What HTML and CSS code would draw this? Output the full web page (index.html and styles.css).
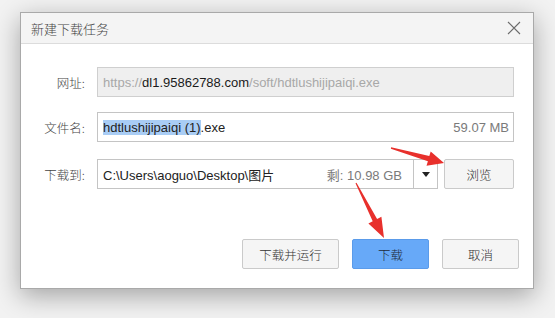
FILE: index.html
```html
<!DOCTYPE html>
<html lang="zh-CN">
<head>
  <meta charset="UTF-8">
  <title>新建下载任务</title>
  <link rel="stylesheet" href="styles.css">
</head>
<body>
  <div class="screen">

    <div class="dialog">
      <div class="titlebar">
        <span class="title">新建下载任务</span>
        <svg class="close" width="14" height="14" viewBox="0 0 14 14">
          <path d="M1 1 L13 13 M13 1 L1 13" stroke="#6b6b6b" stroke-width="1.1" fill="none"/>
        </svg>
      </div>

      <div class="form">
        <div class="row">
          <label class="label">网址:</label>
          <div class="field readonly">
            <span class="muted">https://</span><span class="host">dl1.95862788.com</span><span class="muted">/soft/hdtlushijipaiqi.exe</span>
          </div>
        </div>

        <div class="row">
          <label class="label">文件名:</label>
          <div class="field">
            <span class="name"><span class="selected">hdtlushijipaiqi (1)</span>.exe</span>
            <span class="size">59.07 MB</span>
          </div>
        </div>

        <div class="row row-path">
          <label class="label">下载到:</label>
          <div class="field combo">
            <span class="name">C:\Users\aoguo\Desktop\图片</span>
            <span class="size free">剩: 10.98 GB</span>
            <span class="drop"><span class="caret"></span></span>
          </div>
          <button class="btn browse">浏览</button>
        </div>
      </div>

      <div class="actions">
        <button class="btn wide">下载并运行</button>
        <button class="btn primary">下载</button>
        <button class="btn">取消</button>
      </div>
    </div>

    <!-- annotation arrows drawn over the screenshot -->
    <svg class="annot" width="555" height="318" viewBox="0 0 555 318">
      <polygon fill="#e8302c" points="391.1,147.3 429.3,156.0 430.7,151.5 444,163 426.5,165.7 427.9,161.2 390.9,148.7"/>
      <polygon fill="#e8302c" points="355.5,183.2 372.7,221.3 368.4,223.6 384,238 381.4,216.8 377.1,219.1 356.5,182.8"/>
    </svg>

  </div>
</body>
</html>
```

FILE: styles.css
```css
* {
  margin: 0;
  padding: 0;
  box-sizing: border-box;
}

body {
  background: #f2f2f2;
  font-family: "Liberation Sans", "Noto Sans CJK SC", sans-serif;
  font-size: 13px;
  color: #333;
  overflow: hidden;
}

.screen {
  position: relative;
  width: 555px;
  height: 318px;
  padding: 12px 0 0 20px;
}

.dialog {
  width: 514px;
  height: 277px;
  background: #fff;
  border: 1px solid #a9a9a9;
  box-shadow: 0 7px 24px rgba(0, 0, 0, 0.32);
  display: flex;
  flex-direction: column;
}

.titlebar {
  height: 31px;
  background: #f4f4f4;
  border-bottom: 1px solid #dcdcdc;
  display: flex;
  align-items: center;
  justify-content: space-between;
  padding: 0 12px 0 10px;
}

.title {
  color: #444;
  font-family: "Noto Sans CJK SC", sans-serif;
  font-weight: 300;
  font-size: 13px;
}

.form {
  display: flex;
  flex-direction: column;
  gap: 15px;
  padding: 23px 19px 0 0;
}

.row {
  display: flex;
  align-items: center;
  height: 30px;
}

.row-path {
  margin-top: 2px;
}

.label {
  width: 64px;
  text-align: right;
  margin-right: 12px;
  color: #444;
  font-family: "Noto Sans CJK SC", sans-serif;
  font-weight: 300;
  font-size: 12.5px;
}

.field {
  flex: 1;
  height: 30px;
  border: 1px solid #c4c4c4;
  background: #fff;
  display: flex;
  align-items: center;
  padding: 0 4px 0 5px;
  white-space: nowrap;
  font-size: 13px;
}

.field.readonly {
  background: #efefef;
  border-color: #cfcfcf;
}

.muted {
  color: #a8a8a8;
}

.host {
  color: #1a1a1a;
}

.name {
  flex: 1;
  color: #222;
}

.selected {
  background: #a9cdf5;
}

.size {
  color: #7a7a7a;
}

.combo {
  flex: 0 0 341px;
  padding-right: 0;
}

.free {
  margin-right: 11px;
}

.drop {
  width: 24px;
  height: 28px;
  border-left: 1px solid #c4c4c4;
  display: flex;
  align-items: center;
  justify-content: center;
}

.caret {
  width: 0;
  height: 0;
  border-left: 4px solid transparent;
  border-right: 4px solid transparent;
  border-top: 5px solid #222;
}

.btn {
  height: 30px;
  width: 77px;
  background: #f5f5f5;
  border: 1px solid #cacaca;
  border-radius: 2px;
  color: #333;
  font-family: "Noto Sans CJK SC", sans-serif;
  font-weight: 300;
  font-size: 12.5px;
}

.browse {
  width: 70px;
  margin-left: 6px;
}

.actions {
  display: flex;
  justify-content: flex-end;
  gap: 13px;
  margin-top: auto;
  padding: 0 14px 19px 0;
}

.wide {
  width: 97px;
}

.primary {
  background: #67a9f8;
  border-color: #5a9bea;
  color: #1e2a3a;
}

.annot {
  position: absolute;
  top: 0;
  left: 0;
  pointer-events: none;
}
```
